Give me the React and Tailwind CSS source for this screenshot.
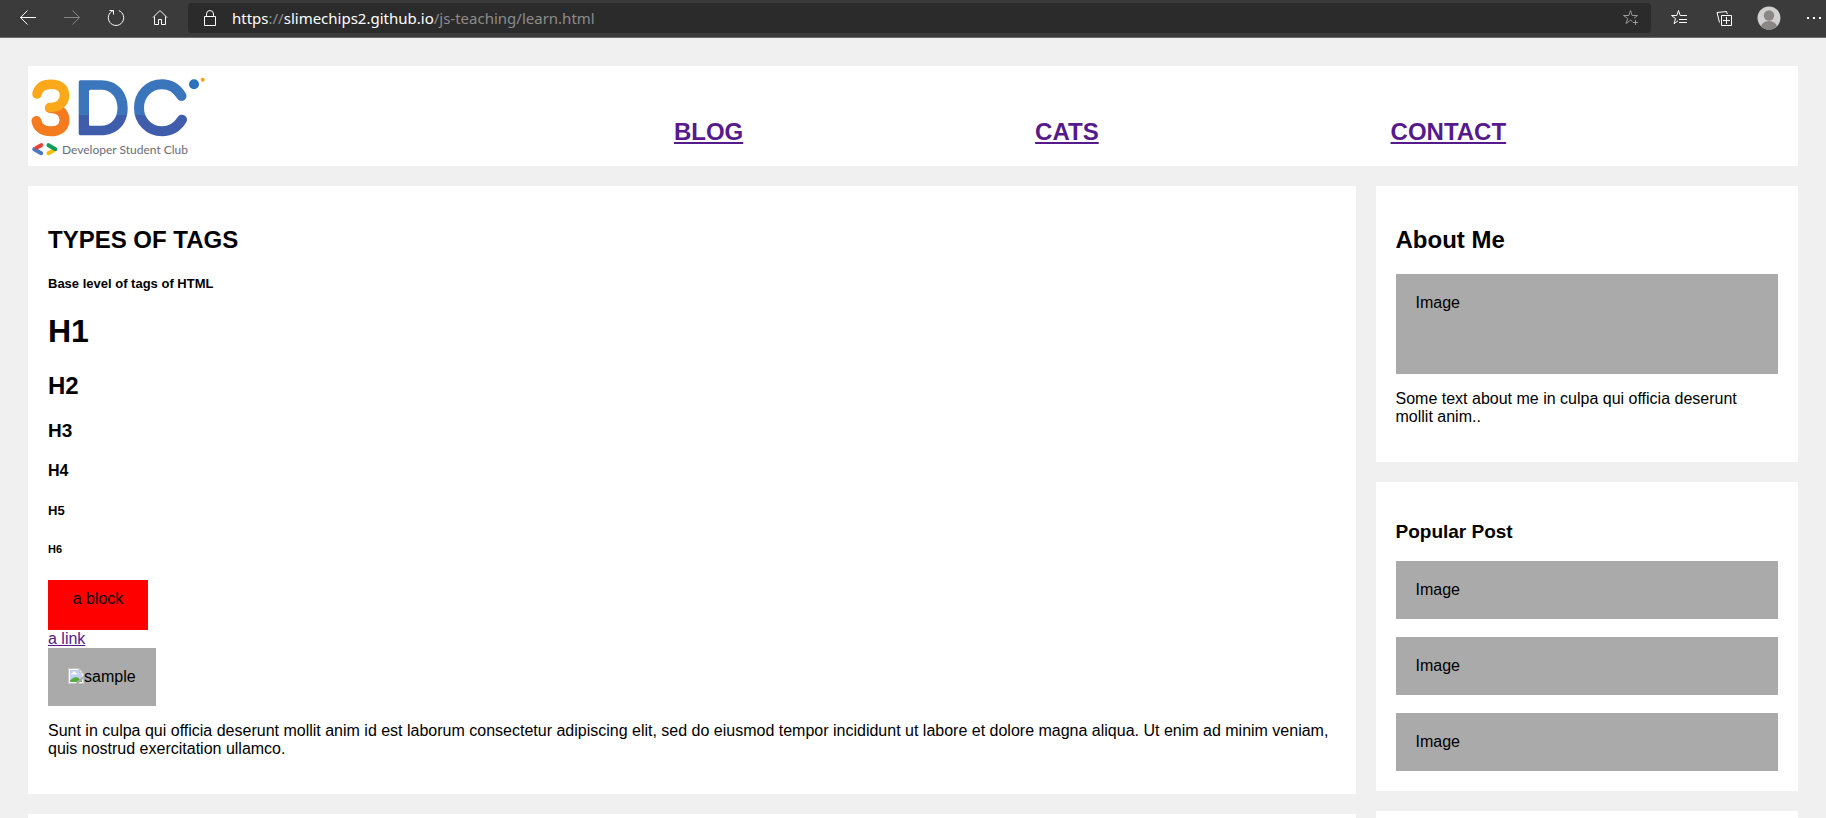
const icon = "fill-none stroke-current";

function IconButton({ label, className = "text-white", children }) {
  return (
    <button type="button" aria-label={label} className={`flex h-8 w-11 shrink-0 items-center justify-center ${className}`}>
      {children}
    </button>
  );
}

function BrowserBar() {
  return (
    <div className="flex h-[38px] shrink-0 items-center overflow-hidden border-b border-[#6b6b6b] bg-[#3b3b3b] pb-px pl-1.5">
      <IconButton label="Back">
        <svg width="18" height="18" viewBox="0 0 18 18" className={icon}>
          <path d="M8.500 1.500 1.500 8.500 8.500 15.500M1.500 8.500H17" />
        </svg>
      </IconButton>
      <IconButton label="Forward" className="text-[#858585]">
        <svg width="18" height="18" viewBox="0 0 18 18" className={icon}>
          <path d="M9.500 1.500 16.500 8.500 9.500 15.500M16.500 8.500H1" />
        </svg>
      </IconButton>
      <IconButton label="Refresh">
        <svg width="18" height="18" viewBox="0 0 18 18" className={icon}>
          <path d="M11.800 1.600A7.700 7.700 0 1 1 6.200 1.600M2.500 1.500H6.500V5.500" />
        </svg>
      </IconButton>
      <IconButton label="Home">
        <svg width="18" height="18" viewBox="0 0 18 18" className={icon}>
          <path d="M2 8.500 9 1.500 16 8.500M3.500 7.500V15.500H7.500V10.500H10.500V15.500H14.500V7.500" />
        </svg>
      </IconButton>
      <div className="ml-1.5 flex h-[30px] min-w-0 flex-1 items-center rounded bg-[#2b2b2b] text-white">
        <svg width="14" height="18" viewBox="0 0 14 18" className="ml-[15px] shrink-0 fill-none stroke-current">
          <path d="M1.500 7.500H12.500V16.500H1.500ZM3.500 7.500V5A3.500 3.500 0 0 1 10.500 5V7.500" />
        </svg>
        <a
          href="https://slimechips2.github.io/js-teaching/learn.html"
          className="ml-[15px] flex-1 truncate font-['Noto_Sans',sans-serif] text-[15px] leading-5 text-[#8c8c8c]"
        >
          <span className="text-white">https</span>://<span className="text-white">slimechips2.github.io</span>/js-teaching/learn.html
        </a>
        <button type="button" aria-label="Add to favorites" className="flex h-[30px] w-10 items-center justify-center text-[#9a9a9a]">
          <svg width="18" height="18" viewBox="0 0 18 18" className={icon}>
            <path d="M10.500 12.500 8.500 11.200 4 14.500 5.700 9.500 1.500 6.500H6.800L8.500 1.500 10.200 6.500H15.500L12 9.300M13.500 11V16M11 13.500H16" />
          </svg>
        </button>
      </div>
      <div className="-mr-2.5 ml-1.5 flex shrink-0 gap-px">
        <IconButton label="Favorites">
          <svg width="18" height="18" viewBox="0 0 18 18" className={icon}>
            <path d="M8 11.700 4 14.800 5.500 9.500 1.500 6.500H6.800L8.500 1.500 10.200 6.500H17M9 10.500H17M9 13.500H17" />
          </svg>
        </IconButton>
        <IconButton label="Collections">
          <svg width="18" height="18" viewBox="0 0 18 18" className={icon}>
            <path d="M6.500 6.500H16.500V16.500H6.500ZM11.500 8V15M8 11.500H15M4.500 13.500 2 3.500 11.500 2.500 12.300 5" />
          </svg>
        </IconButton>
        <IconButton label="Profile">
          <svg width="24" height="24" viewBox="0 0 24 24">
            <clipPath id="avatar">
              <circle cx="12" cy="12" r="11.500" />
            </clipPath>
            <g clipPath="url(#avatar)">
              <path fill="#d2d0ce" d="M0 0H24V24H0Z" />
              <circle cx="12" cy="9.500" r="5.200" fill="#8a8683" />
              <ellipse cx="12" cy="21" rx="8" ry="6" fill="#8a8683" />
            </g>
          </svg>
        </IconButton>
        <IconButton label="Settings and more">
          <svg width="16" height="4" viewBox="0 0 16 4" fill="currentColor">
            <path d="M1 1H3V3H1ZM7 1H9V3H7ZM13 1H15V3H13Z" />
          </svg>
        </IconButton>
      </div>
    </div>
  );
}

function Logo() {
  return (
    <svg viewBox="0 0 180 100" className="h-[100px] w-[180px]" role="img" aria-label="3DC Developer Student Club">
      <defs>
        <linearGradient id="blues" gradientUnits="userSpaceOnUse" x1="0" y1="0" x2="0" y2="100">
          <stop offset="0.485" stopColor="#3b75bb" />
          <stop offset="0.490" stopColor="#3f5dab" />
        </linearGradient>
      </defs>
      <g fill="none" strokeWidth="10" strokeLinecap="round" strokeLinejoin="round">
        <path stroke="#f47b20" d="M22 42C32 42 36.500 47 36.500 54C36.500 61 31 65.300 23 65.300C14 65.300 9.500 61 8.500 55" />
        <path stroke="#fba81a" strokeWidth="9.500" d="M9 28C10.500 22 15 18.300 23 18.300C31 18.300 36.500 22 36.500 29C36.500 37 31 41.500 22 41.500" />
        <path
          stroke="url(#blues)"
          d="M153.500 30C149 22.500 142 18.300 134 18.300C121 18.300 111 28.500 111 41.800S121 65.300 134 65.300C142.500 65.300 149.500 61 154 53.700"
        />
      </g>
      <path
        fill="url(#blues)"
        fillRule="evenodd"
        d="M52.500 14.300H73C89 14.300 99.700 25.500 99.700 42S89 69.300 73 69.300H52.500Q50.700 69.300 50.700 67.500V16.100Q50.700 14.300 52.500 14.300ZM62.500 23.800Q61 23.800 61 25.300V58.300Q61 59.800 62.500 59.800H73C83 59.800 89.500 52.500 89.500 42S83 23.800 73 23.800Z"
      />
      <circle cx="166" cy="18.300" r="5" fill="#2c72bb" />
      <circle cx="174.700" cy="13.700" r="2" fill="#f9a11b" />
      <g fill="none" strokeWidth="4" strokeLinecap="round">
        <path stroke="#4a78c8" d="M6.200 83.200 13.200 87.200" />
        <path stroke="#ea4335" d="M13.200 79.200 8.500 81.800" />
        <path stroke="#fbbc05" d="M20.500 87.200 25 84.700" />
        <path stroke="#109d58" d="M20.500 79.200 27.400 83.200" />
      </g>
      <text x="34" y="88" className="fill-[#6a6e75] font-['Lato',sans-serif] text-[12px]">
        Developer Student Club
      </text>
    </svg>
  );
}

function BrokenImage() {
  return (
    <svg width="16" height="16" viewBox="0 0 16 16" aria-hidden="true">
      <path fill="#ffffff" stroke="#c4c4c4" d="M0.500 0.500H11L15.500 5V15.500H0.500Z" />
      <path fill="#bfd3f6" d="M2 2H10.500V6H14V14H2Z" />
      <path fill="#ffffff" d="M3 6.500Q3 5 4.500 5Q5 3.500 6.300 3.500Q8 3.500 8 5Q9.200 5.200 9 6.500Z" />
      <path fill="#58ac3b" d="M2 14V12.500Q5 9 8 9Q10.500 9.300 12 11.500L9 14Z" />
      <path fill="#e4e4e4" stroke="#b0b0b0" d="M11 0.500V5H15.500Z" />
      <path stroke="#aaaaaa" strokeWidth="2" d="M8.500 16 16 8.500" />
      <path fill="#58ac3b" d="M12 14 14 12V14Z" />
    </svg>
  );
}

function Placeholder({ className = "", children }) {
  return <div className={`bg-[#aaaaaa] p-5 ${className}`}>{children}</div>;
}

function Card({ children }) {
  return <section className="flex flex-col items-start bg-white p-5">{children}</section>;
}

const links = ["BLOG", "CATS", "CONTACT"];
const posts = [1, 2, 3];

export default function App() {
  return (
    <div className="flex min-h-screen flex-col bg-[#f0f0f0] font-['Liberation_Sans',sans-serif] text-base leading-[18px] text-black">
      <BrowserBar />
      <div className="flex flex-1 flex-col gap-5 px-7 pt-7">
        <header className="flex bg-white">
          <div className="w-1/5">
            <Logo />
          </div>
          <nav className="flex flex-1 items-end justify-evenly pb-5">
            {links.map((name) => (
              <a key={name} href={`#${name.toLowerCase()}`} className="text-2xl leading-7 font-bold text-[#551a8b] underline">
                {name}
              </a>
            ))}
          </nav>
        </header>

        <main className="grid flex-1 grid-cols-[3fr_1fr]">
          <div className="flex flex-col gap-5">
            <Card>
              <h2 className="mt-5 text-2xl leading-[27px] font-bold">TYPES OF TAGS</h2>
              <h5 className="mt-[23px] text-[13px] leading-[15px] font-bold">Base level of tags of HTML</h5>
              <h1 className="mt-[22px] text-[32px] leading-[37px] font-bold">H1</h1>
              <h2 className="mt-[22px] text-2xl leading-[27px] font-bold">H2</h2>
              <h3 className="mt-[21px] text-[19px] leading-[21px] font-bold">H3</h3>
              <h4 className="mt-[21px] font-bold">H4</h4>
              <h5 className="mt-[23px] text-[13px] leading-[15px] font-bold">H5</h5>
              <h6 className="mt-[25px] text-[11px] leading-[12px] font-bold">H6</h6>
              <div className="mt-[25px] h-[50px] w-[100px] bg-[#ff0000] pt-2.5 text-center">a block</div>
              <a href="#link" className="text-[#551a8b] underline">
                a link
              </a>
              <Placeholder className="flex">
                <BrokenImage />
                sample
              </Placeholder>
              <p className="my-4">
                Sunt in culpa qui officia deserunt mollit anim id est laborum consectetur adipiscing elit, sed do eiusmod
                tempor incididunt ut labore et dolore magna aliqua. Ut enim ad minim veniam, quis nostrud exercitation
                ullamco.
              </p>
            </Card>
            <section className="flex-1 bg-white" />
          </div>

          <aside className="flex flex-col gap-5 pl-5">
            <Card>
              <h2 className="mt-5 text-2xl leading-[27px] font-bold">About Me</h2>
              <Placeholder className="mt-[21px] h-[100px] w-full">Image</Placeholder>
              <p className="my-4">Some text about me in culpa qui officia deserunt mollit anim..</p>
            </Card>
            <Card>
              <h3 className="mt-[19px] text-[19px] leading-[21px] font-bold">Popular Post</h3>
              <div className="mt-[19px] flex w-full flex-col gap-[18px]">
                {posts.map((post) => (
                  <Placeholder key={post}>Image</Placeholder>
                ))}
              </div>
            </Card>
            <section className="flex-1 bg-white" />
          </aside>
        </main>
      </div>
    </div>
  );
}
